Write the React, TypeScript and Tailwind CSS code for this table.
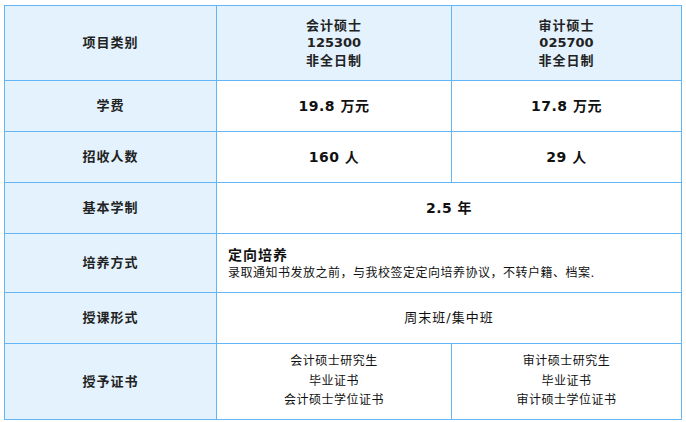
const label = "bg-[#e3f2fd] border border-[#64b5f6] text-center font-bold text-[13px] tracking-[1px] text-[#222]";
const cell = "border border-[#64b5f6] text-center text-[#111]";

export default function App() {
  return (
    <div
      className="w-[686px] h-[422px] bg-white pl-[4px] pt-[5px]"
      style={{ fontFamily: '"DejaVu Sans", "Noto Sans CJK SC", sans-serif' }}
    >
      <table className="border-collapse w-[677px] table-fixed">
        <colgroup>
          <col className="w-[212px]" />
          <col className="w-[235px]" />
          <col className="w-[230px]" />
        </colgroup>
        <tbody>
          <tr className="h-[75px]">
            <td className={label}>项目类别</td>
            <td className={label + " leading-[17.5px]"}>
              会计硕士
              <br />
              <span className="tracking-normal">125300</span>
              <br />
              非全日制
            </td>
            <td className={label + " leading-[17.5px]"}>
              审计硕士
              <br />
              <span className="tracking-normal">025700</span>
              <br />
              非全日制
            </td>
          </tr>
          <tr className="h-[51px]">
            <td className={label}>学费</td>
            <td className={cell + " font-bold text-[14px] tracking-[0.5px]"}>19.8 万元</td>
            <td className={cell + " font-bold text-[14px] tracking-[0.5px]"}>17.8 万元</td>
          </tr>
          <tr className="h-[51px]">
            <td className={label}>招收人数</td>
            <td className={cell + " font-bold text-[14px] tracking-[0.5px]"}>160 人</td>
            <td className={cell + " font-bold text-[14px] tracking-[0.5px]"}>29 人</td>
          </tr>
          <tr className="h-[51px]">
            <td className={label}>基本学制</td>
            <td colSpan={2} className={cell + " font-bold text-[14px] tracking-[0.5px]"}>
              2.5 年
            </td>
          </tr>
          <tr className="h-[59px]">
            <td className={label}>培养方式</td>
            <td colSpan={2} className="border border-[#64b5f6] text-left pl-[11px] text-[#111]">
              <div className="font-bold text-[14px] tracking-[1px] leading-[20px]">定向培养</div>
              <div className="text-[12px] tracking-[0.5px] leading-[17px]">
                录取通知书发放之前，与我校签定定向培养协议，不转户籍、档案.
              </div>
            </td>
          </tr>
          <tr className="h-[51px]">
            <td className={label}>授课形式</td>
            <td colSpan={2} className={cell + " text-[13px] tracking-[1px]"}>
              周末班/集中班
            </td>
          </tr>
          <tr className="h-[76px]">
            <td className={label}>授予证书</td>
            <td className={cell + " text-[12px] tracking-[0.5px] leading-[19.5px]"}>
              会计硕士研究生
              <br />
              毕业证书
              <br />
              会计硕士学位证书
            </td>
            <td className={cell + " text-[12px] tracking-[0.5px] leading-[19.5px]"}>
              审计硕士研究生
              <br />
              毕业证书
              <br />
              审计硕士学位证书
            </td>
          </tr>
        </tbody>
      </table>
    </div>
  );
}
